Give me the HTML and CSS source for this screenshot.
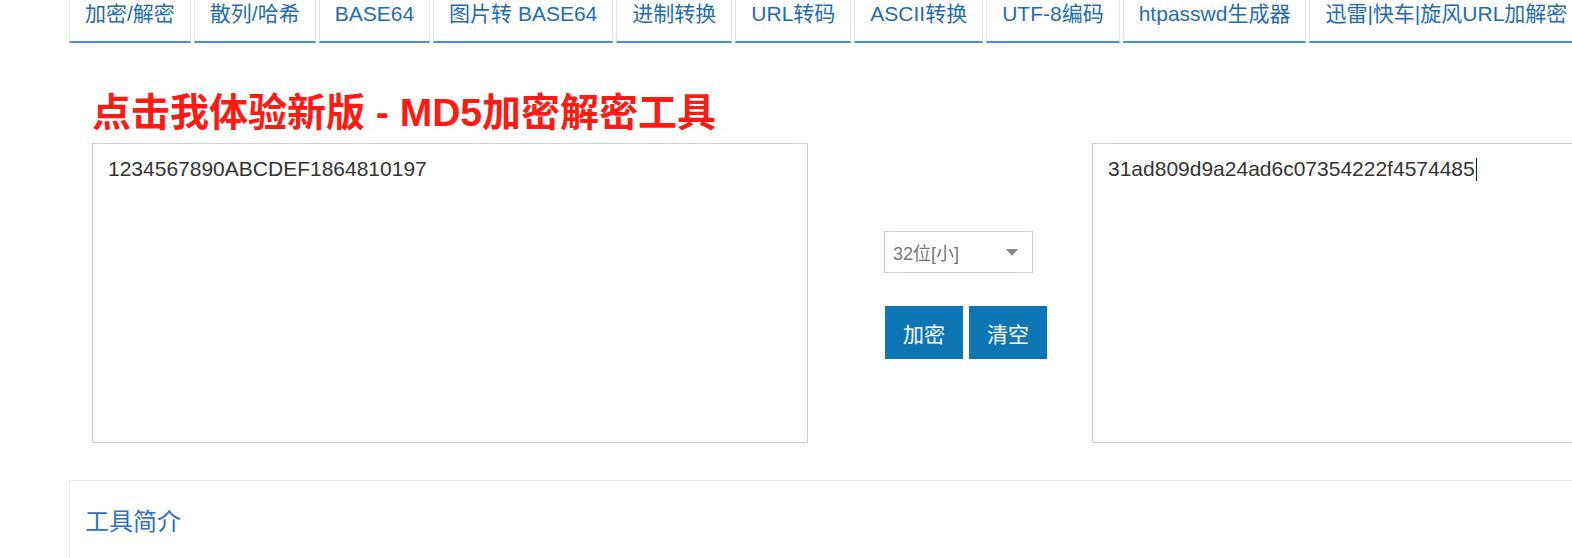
FILE: index.html
```html
<!DOCTYPE html>
<html lang="zh-CN">
<head>
<meta charset="utf-8">
<title>MD5加密解密</title>
<link rel="stylesheet" href="styles.css">
</head>
<body>
<div class="page">
  <nav class="tabs">
    <a class="tab">加密/解密</a>
    <a class="tab">散列/哈希</a>
    <a class="tab">BASE64</a>
    <a class="tab">图片转 BASE64</a>
    <a class="tab">进制转换</a>
    <a class="tab">URL转码</a>
    <a class="tab">ASCII转换</a>
    <a class="tab">UTF-8编码</a>
    <a class="tab">htpasswd生成器</a>
    <a class="tab">迅雷|快车|旋风URL加解密</a>
  </nav>
  <div class="content">
    <h1 class="title">点击我体验新版 - MD5加密解密工具</h1>
    <div class="work">
      <div class="box">1234567890ABCDEF1864810197</div>
      <div class="middle">
        <div class="select"><span>32位[小]</span><i class="arrow"></i></div>
        <div class="buttons">
          <button class="btn">加密</button>
          <button class="btn">清空</button>
        </div>
      </div>
      <div class="box">31ad809d9a24ad6c07354222f4574485<span class="caret"></span></div>
    </div>
  </div>
  <section class="intro">
    <h2 class="intro-title">工具简介</h2>
  </section>
</div>
</body>
</html>
```
FILE: styles.css
```css
html, body {
  margin: 0;
  padding: 0;
  overflow: hidden;
  background: #fff;
}
body {
  font-family: "Liberation Sans", "Noto Sans CJK SC", sans-serif;
  color: #333;
}
.page {
  margin-left: 69px;
  width: 1760px;
}
.tabs {
  display: flex;
  gap: 3px;
}
.tab {
  display: block;
  flex: none;
  font-size: 21px;
  line-height: 28px;
  padding: 0 15px 13px;
  color: #1e6db3;
  border-left: 1px solid #e6e6e6;
  border-right: 1px solid #e6e6e6;
  border-bottom: 2px solid #4a8be8;
  white-space: nowrap;
}
.content {
  padding: 0 0 0 23px;
}
.title {
  margin: 0;
  padding-top: 44px;
  height: 56px;
  font-size: 39px;
  line-height: 52px;
  font-weight: 700;
  color: #ff1a14;
  font-family: "Liberation Sans", "Noto Sans CJK SC", sans-serif;
  white-space: nowrap;
}
.work {
  display: flex;
}
.box {
  flex: none;
  width: 684px;
  height: 274px;
  border: 1px solid #c6d0de;
  padding: 12px 15px;
  font-size: 21px;
  line-height: 25px;
  color: #333;
}
.caret {
  display: inline-block;
  width: 0;
  height: 23px;
  border-left: 1px solid #222;
  vertical-align: -5px;
  margin-left: 1px;
}
.middle {
  flex: none;
  width: 208px;
  padding: 88px 0 0 76px;
}
.select {
  box-sizing: border-box;
  width: 149px;
  height: 42px;
  border: 1px solid #c6d0de;
  display: flex;
  align-items: center;
  justify-content: space-between;
  padding: 0 14px 0 8px;
  font-size: 18px;
  color: #777;
}
.arrow {
  width: 0;
  height: 0;
  border-left: 6px solid transparent;
  border-right: 6px solid transparent;
  border-top: 7px solid #888;
}
.buttons {
  display: flex;
  gap: 6px;
  margin-top: 33px;
  padding-left: 1px;
}
.btn {
  width: 78px;
  height: 53px;
  border: 0;
  margin: 0;
  padding: 0;
  background: #0f76b4;
  color: #fff;
  font-size: 21px;
  font-family: "Liberation Sans", "Noto Sans CJK SC", sans-serif;
}
.intro {
  margin-top: 37px;
  border: 1px solid #e6e6e6;
  height: 200px;
  padding: 0 15px;
}
.intro-title {
  margin: 0;
  padding-top: 24px;
  font-size: 24px;
  line-height: 34px;
  font-weight: 400;
  color: #2f70c5;
}
```
